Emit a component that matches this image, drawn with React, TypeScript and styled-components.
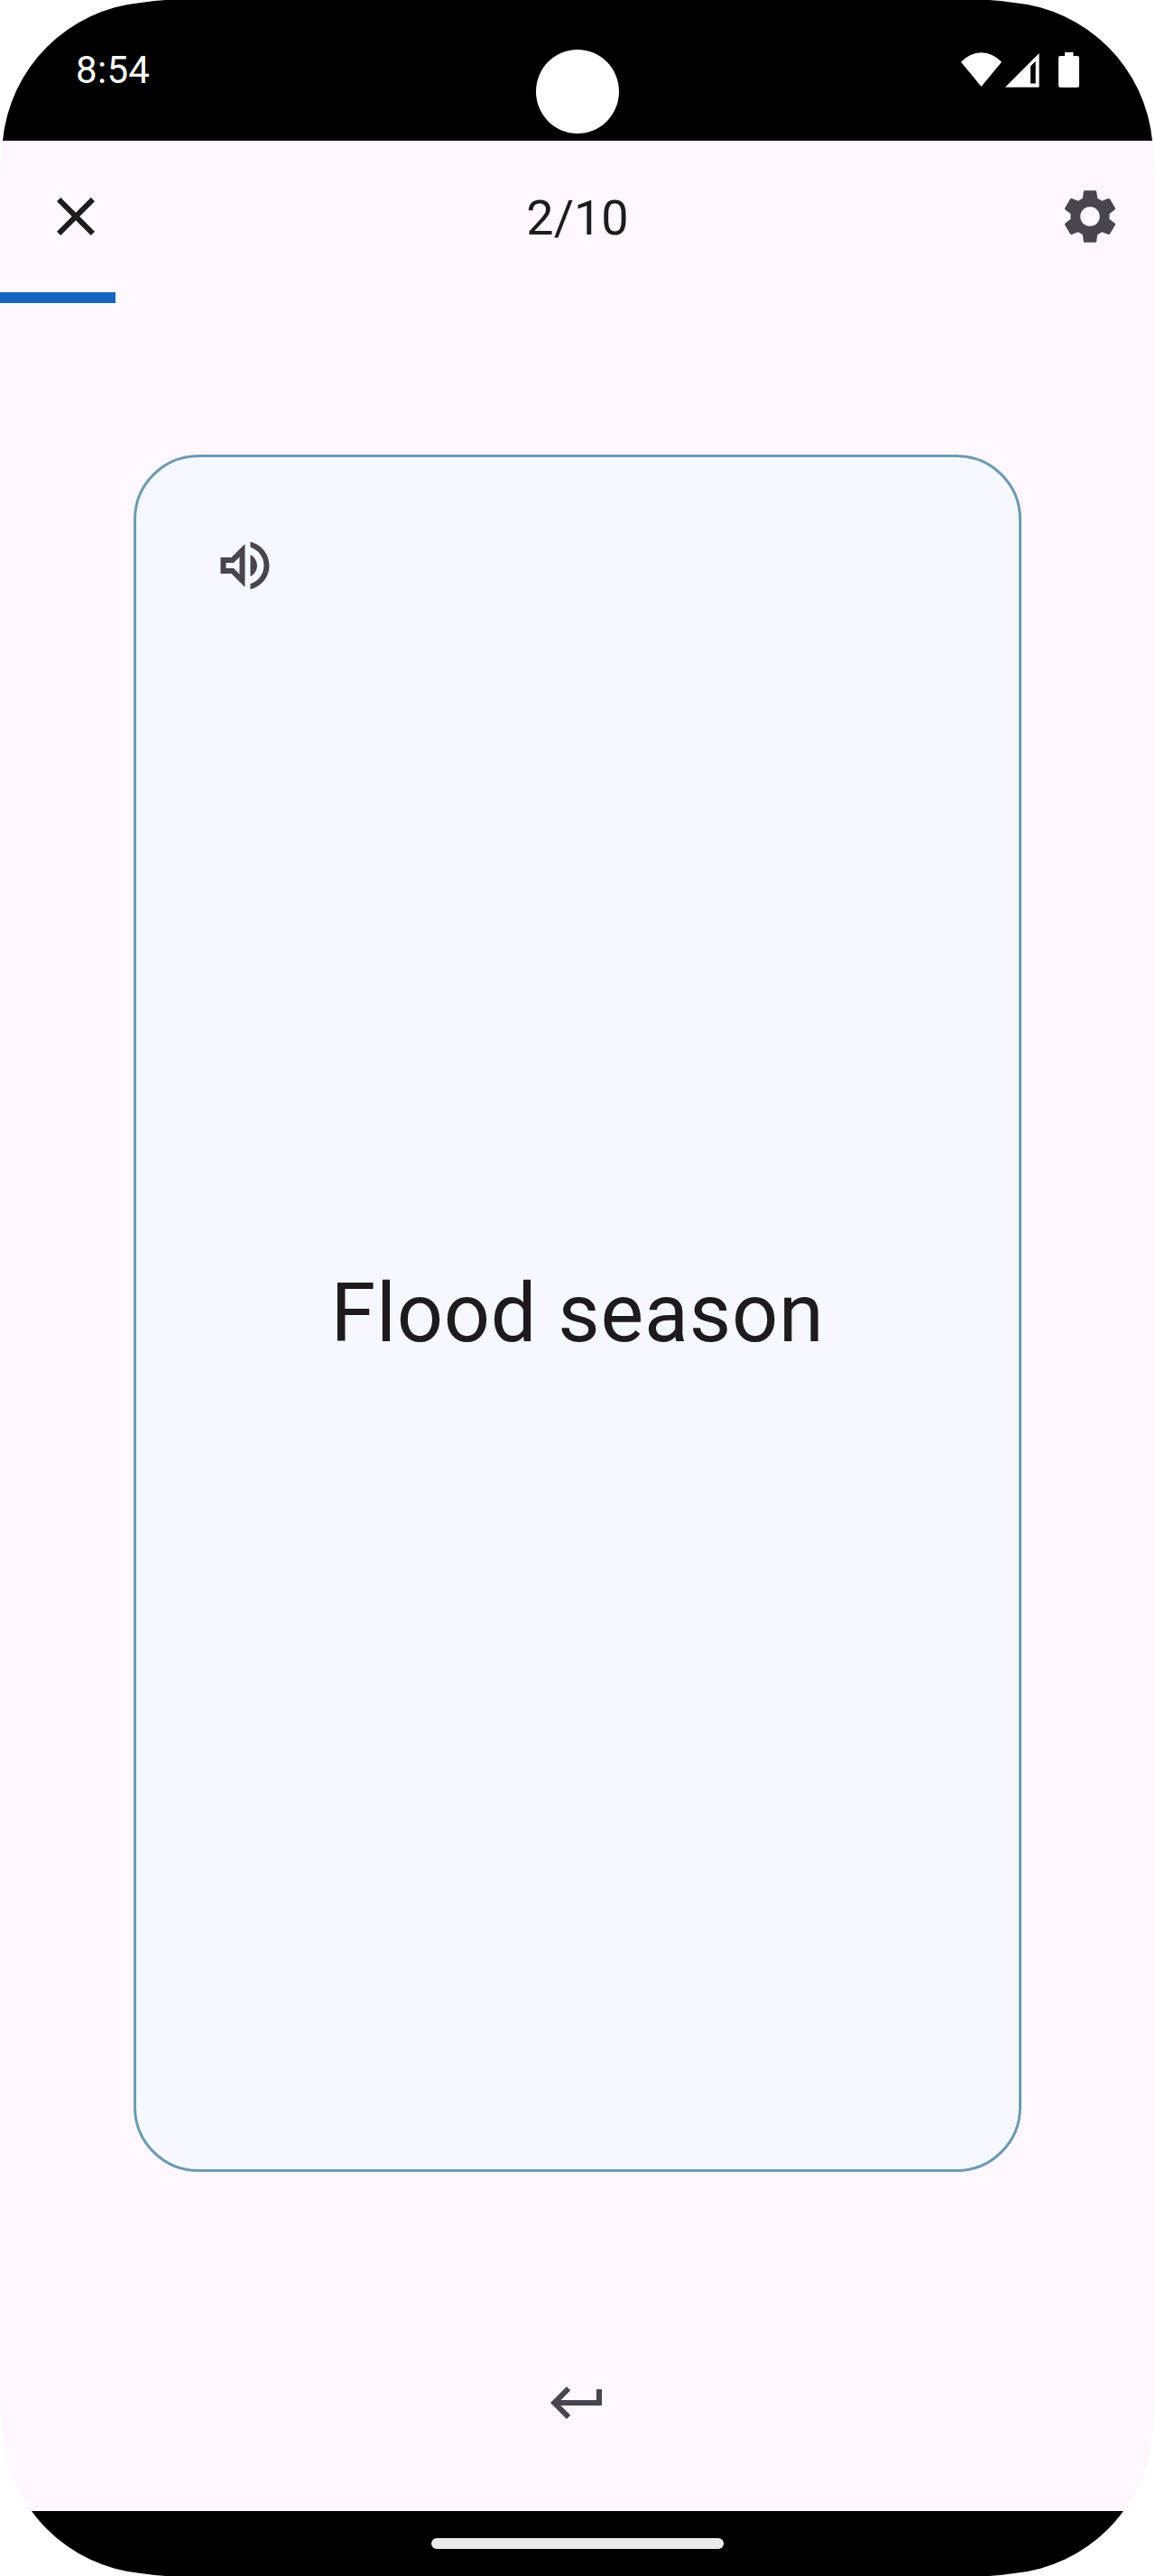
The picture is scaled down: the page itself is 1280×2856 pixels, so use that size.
import React from "react";
import styled, { createGlobalStyle } from "styled-components";

const Global = createGlobalStyle`
  *, *::before, *::after { box-sizing: border-box; }
  html, body { margin: 0; padding: 0; background: #ffffff; }
  body { font-family: Roboto, "Noto Sans", sans-serif; }
`;

const CORNERS =
  "M0 214 Q1 180 3 156 A170 170 0 0 1 156 3 Q172 0.6 184 0 L1096 0 Q1108 0.6 1124 3 " +
  "A170 170 0 0 1 1277 156 Q1279 180 1280 200 L1280 2656 Q1279 2680 1277 2700 " +
  "A170 170 0 0 1 1124 2853 Q1108 2855.4 1096 2856 L184 2856 Q172 2855.4 156 2853 " +
  "A170 170 0 0 1 3 2700 Q1 2676 0 2642 Z";

const Phone = styled.div`
  display: flex;
  flex-direction: column;
  width: 1280px;
  height: 2856px;
  overflow: hidden;
  background: #fef7ff;
  color: #1d1b20;
  clip-path: path("${CORNERS}");
`;

const StatusBar = styled.header`
  display: grid;
  grid-template-columns: 1fr auto 1fr;
  align-items: start;
  height: 156px;
  padding: 55px 84px 0;
  background: #000000;
  color: #ffffff;
`;

const Clock = styled.span`
  padding-top: 1px;
  font-size: 42px;
  line-height: 44px;
  letter-spacing: 0.3px;
`;

const Camera = styled.div`
  width: 92px;
  height: 93px;
  border-radius: 50%;
  background: #ffffff;
`;

const StatusIcons = styled.svg`
  display: block;
  justify-self: end;
  margin-top: 2px;
  width: 131px;
  height: 42px;
`;

const TopBar = styled.nav`
  display: grid;
  grid-template-columns: 72px 1fr 72px;
  align-items: center;
  height: 168px;
  padding: 0 36px 0 48px;
`;

const Counter = styled.h1`
  margin: 0;
  padding: 3px 12px 0 0;
  text-align: center;
  font-size: 54px;
  font-weight: 400;
  line-height: 72px;
`;

const IconButton = styled.button<{ $color?: string }>`
  display: flex;
  padding: 0;
  border: 0;
  background: none;
  color: ${({ $color }) => $color ?? "#49454f"};
`;

const Glyph = styled.svg`
  display: block;
  width: 72px;
  height: 72px;
  fill: currentColor;
`;

const Track = styled.div`
  height: 12px;
`;

const Progress = styled.div`
  height: 100%;
  background: #1565c0;
`;

const Stage = styled.main`
  display: flex;
  justify-content: center;
  padding-top: 168px;
`;

const Card = styled.article`
  display: flex;
  flex-direction: column;
  width: 984px;
  height: 1904px;
  padding: 84px;
  border: 3px solid #6f9ab0;
  border-radius: 72px;
  background: #f5f9ff;
`;

const Term = styled.p`
  flex: 1;
  display: flex;
  align-items: center;
  justify-content: center;
  margin: 0;
  padding-bottom: 70px;
  font-size: 90px;
  line-height: 120px;
  letter-spacing: 0.75px;
`;

const Actions = styled.footer`
  flex: 1;
  display: flex;
  justify-content: center;
  align-items: flex-end;
  padding-bottom: 84px;
`;

const NavBar = styled.div`
  display: flex;
  align-items: center;
  justify-content: center;
  height: 72px;
  background: #000000;
`;

const Handle = styled.div`
  width: 324px;
  height: 12px;
  border-radius: 6px;
  background: #ebebeb;
`;

const PATHS = {
  close:
    "M19 6.41L17.59 5 12 10.59 6.41 5 5 6.41 10.59 12 5 17.59 6.41 19 12 13.41 17.59 19 19 17.59 13.41 12z",
  settings:
    "M19.14 12.94c.04-.3.06-.61.06-.94 0-.32-.02-.64-.07-.94l2.03-1.58c.18-.14.23-.41.12-.61l-1.92-3.32c-.12-.22-.37-.29-.59-.22l-2.39.96c-.5-.38-1.03-.7-1.62-.94l-.36-2.54c-.04-.24-.24-.41-.48-.41h-3.84c-.24 0-.43.17-.47.41l-.36 2.54c-.59.24-1.13.57-1.62.94l-2.39-.96c-.22-.08-.47 0-.59.22L2.74 8.87c-.12.21-.08.47.12.61l2.03 1.58c-.05.3-.09.63-.09.94s.02.64.07.94l-2.03 1.58c-.18.14-.23.41-.12.61l1.92 3.32c.12.22.37.29.59.22l2.39-.96c.5.38 1.03.7 1.62.94l.36 2.54c.05.24.24.41.48.41h3.84c.24 0 .44-.17.47-.41l.36-2.54c.59-.24 1.13-.56 1.62-.94l2.39.96c.22.08.47 0 .59-.22l1.92-3.32c.12-.22.07-.47-.12-.61l-2.01-1.58zM12 15.6c-1.98 0-3.6-1.62-3.6-3.6s1.62-3.6 3.6-3.6 3.6 1.62 3.6 3.6-1.62 3.6-3.6 3.6z",
  volume:
    "M3.15 9v6h4l5 5V4l-5 5h-4zm7-.17v6.34L7.98 13H5.15v-2h2.83l2.17-2.17zM16.65 12c0-1.77-1.02-3.29-2.5-4.03v8.05c1.48-.73 2.5-2.25 2.5-4.02zM14.15 3.23v2.06c2.89.86 5 3.54 5 6.71s-2.11 5.85-5 6.71v2.06c4.01-.91 7-4.49 7-8.77 0-4.28-2.99-7.86-7-8.77z",
  enter: "M19 7v4H5.83l3.58-3.59L8 6l-6 6 6 6 1.41-1.41L5.83 13H21V7z",
};

function Icon({ name }: { name: keyof typeof PATHS }) {
  return (
    <Glyph viewBox="0 0 24 24" aria-hidden="true">
      <path d={PATHS[name]} fillRule={name === "volume" ? "evenodd" : "nonzero"} />
    </Glyph>
  );
}

export default function App() {
  const current = 2;
  const total = 10;
  const done = current - 1;

  return (
    <>
      <Global />
      <Phone>
        <StatusBar>
          <Clock>8:54</Clock>
          <Camera />
          <StatusIcons viewBox="1065 57 131 42" fill="#ffffff" aria-hidden="true">
            <path d="M1087.5 96 L1065 68.8 Q1075 58.3 1087.5 58.3 Q1100 58.3 1110 68.8 Z" />
            <path
              fillRule="evenodd"
              d="M1114 96.7 L1151.6 59 V96.7 Z M1142 92.6 H1147.7 V67.8 L1142 73.5 Z"
            />
            <path d="M1180 58 H1189.5 V62 H1194 Q1196 62 1196 64 V94.5 Q1196 97 1193.5 97 H1175.5 Q1173 97 1173 94.5 V64 Q1173 62 1175 62 H1180 Z" />
          </StatusIcons>
        </StatusBar>
        <TopBar>
          <IconButton $color="#1d1b20" aria-label="Close">
            <Icon name="close" />
          </IconButton>
          <Counter>
            {current}/{total}
          </Counter>
          <IconButton aria-label="Settings">
            <Icon name="settings" />
          </IconButton>
        </TopBar>
        <Track>
          <Progress style={{ width: `${(done / total) * 100}%` }} />
        </Track>
        <Stage>
          <Card>
            <IconButton aria-label="Listen">
              <Icon name="volume" />
            </IconButton>
            <Term>Flood season</Term>
          </Card>
        </Stage>
        <Actions>
          <IconButton aria-label="Previous">
            <Icon name="enter" />
          </IconButton>
        </Actions>
        <NavBar>
          <Handle />
        </NavBar>
      </Phone>
    </>
  );
}
